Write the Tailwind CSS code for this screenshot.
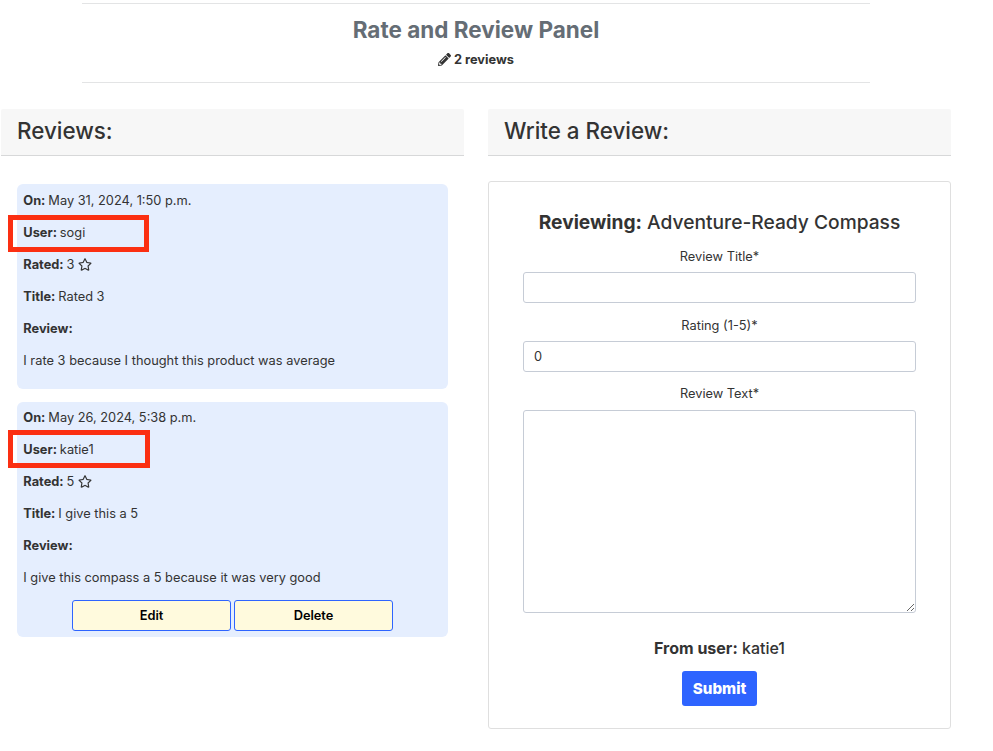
<!DOCTYPE html>
<html lang="en"><head><meta charset="utf-8"><title>Rate and Review Panel</title>
<script src="https://cdn.jsdelivr.net/npm/@tailwindcss/browser@4"></script></head>
<body class="bg-white font-['Inter',sans-serif] text-[12.8px] leading-4 text-[#333333] antialiased w-[993px] h-[751px] overflow-hidden">
<header class="mt-[3px] ml-[82px] w-[788px] h-20 border-y border-[#e3e4e5] text-center">
<h1 class="pt-[11px] text-[22.5px] leading-[30px] font-bold text-[#656d75]">Rate and Review Panel</h1>
<p class="mt-[6px] flex items-center justify-center gap-[3px] font-bold"><svg class="size-[13px]" viewBox="0 0 512 512" fill="currentColor"><path d="M498 142l-46 46c-5 5-13 5-17 0L324 77c-5-5-5-12 0-17l46-46c19-19 49-19 68 0l60 60c19 19 19 49 0 68zm-214-42L22 362 0 484c-3 16 12 30 28 28l122-22 262-262c5-5 5-13 0-17L301 100c-4-5-12-5-17 0zM124 340c-5-6-5-14 0-20l154-154c6-5 14-5 20 0s5 14 0 20L144 340c-6 5-14 5-20 0zm-36 84h48v36l-64 12-32-31 12-65h36v48z"/></svg><span class="pt-px">2 reviews</span></p>
</header>
<main class="flex mt-[26px] ml-px gap-6">
<section class="w-[463px]">
<h2 class="h-[47px] rounded-t-[2px] bg-[#f7f7f7] border-b border-[#d7d8d9] px-4 pt-2 text-[22.4px] leading-7 font-medium">Reviews:</h2>
<article class="relative mx-4 mt-7 h-[205px] w-[431px] rounded-md bg-[#e5eefe] px-[6.3px] pt-[9px] flex flex-col gap-4 [&_b]:mr-[-0.7px]">
<p><b>On:</b> May 31, 2024, 1:50 p.m.</p><p><b>User:</b> sogi</p><p class="flex items-center gap-[4px]"><span><b>Rated:</b> 3</span><svg class="-mt-[2px] w-[14px] h-[13px]" viewBox="0 0 576 512" fill="currentColor"><path d="M528 172l-146-22-65-132c-12-24-46-24-58 0l-65 132-146 22c-26 3-37 36-18 54l106 103-25 145c-5 26 23 46 46 34l131-68 131 68c23 12 51-8 46-34l-25-145 106-103c19-18 8-51-18-54zM389 312l23 138-124-65-124 65 23-138L87 215l138-20 63-126 62 126 139 20z"/></svg></p><p><b>Title:</b> Rated 3</p><p><b>Review:</b></p><p class="tracking-[0.02px]">I rate 3 because I thought this product was average</p>
<span class="absolute left-[-9.5px] top-[30.5px] w-[141px] h-[37px] border-[5px] border-[#fb2f12]"></span>
</article>
<article class="relative mx-4 mt-[13px] h-[235px] w-[431px] rounded-md bg-[#e5eefe] px-[6.3px] pt-2 flex flex-col gap-4 [&_b]:mr-[-0.7px]">
<p><b>On:</b> May 26, 2024, 5:38 p.m.</p><p><b>User:</b> katie1</p><p class="flex items-center gap-[4px]"><span><b>Rated:</b> 5</span><svg class="-mt-[2px] w-[14px] h-[13px]" viewBox="0 0 576 512" fill="currentColor"><path d="M528 172l-146-22-65-132c-12-24-46-24-58 0l-65 132-146 22c-26 3-37 36-18 54l106 103-25 145c-5 26 23 46 46 34l131-68 131 68c23 12 51-8 46-34l-25-145 106-103c19-18 8-51-18-54zM389 312l23 138-124-65-124 65 23-138L87 215l138-20 63-126 62 126 139 20z"/></svg></p><p><b>Title:</b> I give this a 5</p><p><b>Review:</b></p><p>I give this compass a 5 because it was very good</p>
<div class="flex gap-[3px] ml-[48.7px] -mt-[2px]"><button class="w-[159px] h-[31px] shrink-0 rounded-[3px] border border-[#2e64ff] bg-[#fffadd] pt-px font-semibold text-black">Edit</button><button class="w-[159px] h-[31px] shrink-0 rounded-[3px] border border-[#2e64ff] bg-[#fffadd] pt-px font-semibold text-black">Delete</button></div>
<span class="absolute left-[-9px] top-[28px] w-[142px] h-[38px] border-[5px] border-[#fb2f12]"></span>
</article>
</section>
<section class="w-[463px]">
<h2 class="h-[47px] rounded-t-[2px] bg-[#f7f7f7] border-b border-[#d7d8d9] px-4 pt-2 text-[22.4px] leading-7 font-medium">Write a Review:</h2>
<form class="mt-[25px] h-[548px] rounded-[3px] border border-[#dfdfdf] px-[34px] pt-[28px] text-center flex flex-col items-center">
<h3 class="text-[19.2px] leading-6 font-medium"><b>Reviewing:</b> Adventure-Ready Compass</h3>
<label for="title" class="mt-[15px]">Review Title*</label><input id="title" class="mt-[7px] w-[393px] h-[31px] border border-[#c6ccd6] rounded-[3px] px-[10px]">
<label for="rating" class="mt-[15px]">Rating (1-5)*</label><input id="rating" value="0" class="mt-[7px] w-[393px] h-[31px] border border-[#c6ccd6] rounded-[3px] px-[10px] pb-px">
<label for="text" class="mt-[14px]">Review Text*</label><textarea id="text" class="mt-2 w-[393px] h-[203px] shrink-0 border border-[#c6ccd6] rounded-[3px]"></textarea>
<p class="mt-[25px] text-[16px] leading-5 font-medium"><b>From user:</b> katie1</p>
<button class="mt-[13px] w-[75px] h-[35px] shrink-0 rounded-[3px] bg-[#2e64ff] pt-px text-white text-[15.2px] font-extrabold">Submit</button>
</form>
</section>
</main>
</body></html>
